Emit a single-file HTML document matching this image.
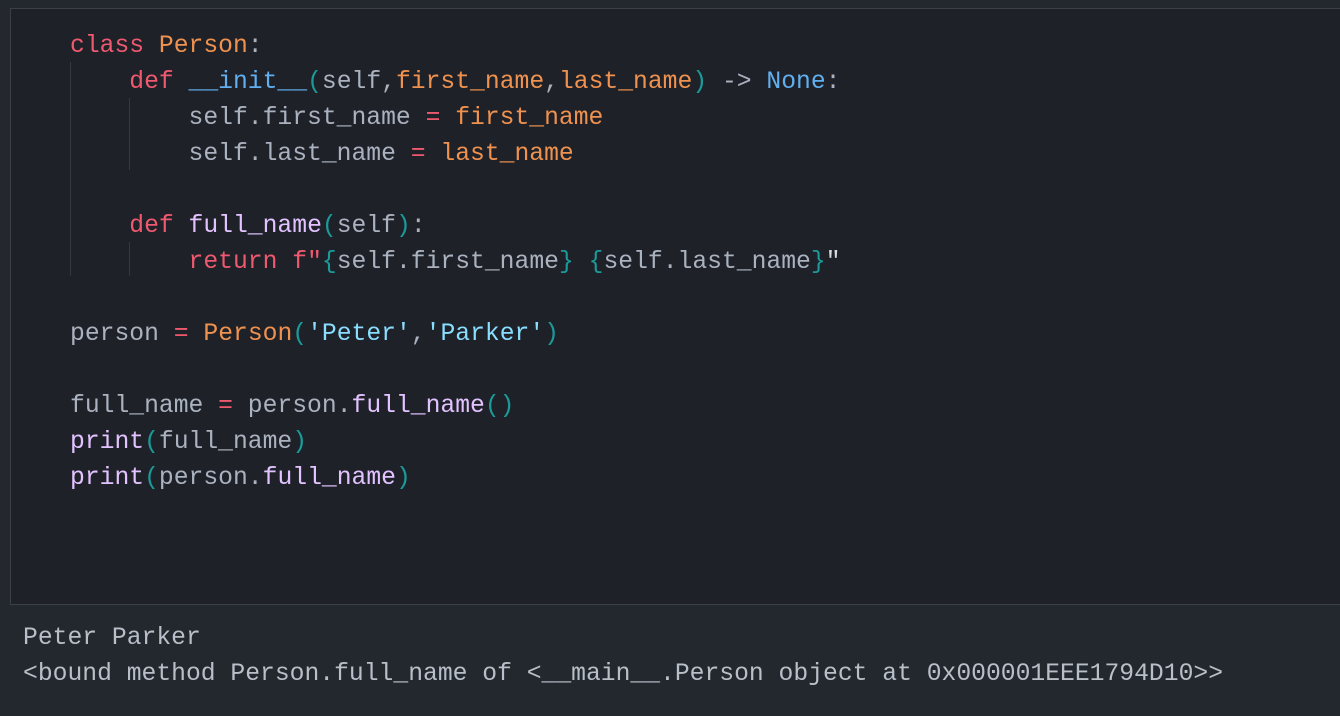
<!DOCTYPE html><html><head><style>
body{margin:0;width:1340px;height:716px;background:#23272e;overflow:hidden;position:relative;font-family:"Liberation Mono","DejaVu Sans Mono",monospace;font-size:24.7px;}
.box{position:absolute;left:10px;top:8px;width:1340px;height:595px;background:#1e2128;border:1px solid #3a3f4a;}
pre{margin:0;font:inherit;line-height:36px;white-space:pre;position:absolute;color:#abb2bf}
.code{left:70px;top:28px}
.out{left:23px;top:620px;color:#b8bfc9}
.k{color:#ef596f}.o{color:#f0924f}.f{color:#61afef}.p{color:#1b9a9a}.m{color:#e2c2ff}.s{color:#89ddff}.w{color:#d6dbe2}
.g{position:absolute;width:1px;background:#343842}
</style></head><body>
<div class="box"></div>
<div class="g" style="left:70px;top:62px;height:214px"></div>
<div class="g" style="left:129px;top:98px;height:72px"></div>
<div class="g" style="left:129px;top:242px;height:34px"></div>
<pre class="code"><span class="k">class</span> <span class="o">Person</span>:
    <span class="k">def</span> <span class="f">__init__</span><span class="p">(</span>self,<span class="o">first_name</span>,<span class="o">last_name</span><span class="p">)</span> -&gt; <span class="f">None</span>:
        self.first_name <span class="k">=</span> <span class="o">first_name</span>
        self.last_name <span class="k">=</span> <span class="o">last_name</span>

    <span class="k">def</span> <span class="m">full_name</span><span class="p">(</span>self<span class="p">)</span>:
        <span class="k">return</span> <span class="k">f"</span><span class="p">{</span>self.first_name<span class="p">}</span> <span class="p">{</span>self.last_name<span class="p">}</span><span class="w">"</span>

person <span class="k">=</span> <span class="o">Person</span><span class="p">(</span><span class="s">'Peter'</span>,<span class="s">'Parker'</span><span class="p">)</span>

full_name <span class="k">=</span> person.<span class="m">full_name</span><span class="p">()</span>
<span class="m">print</span><span class="p">(</span>full_name<span class="p">)</span>
<span class="m">print</span><span class="p">(</span>person.<span class="m">full_name</span><span class="p">)</span></pre>
<pre class="out">Peter Parker
&lt;bound method Person.full_name of &lt;__main__.Person object at 0x000001EEE1794D10&gt;&gt;</pre>
</body></html>
